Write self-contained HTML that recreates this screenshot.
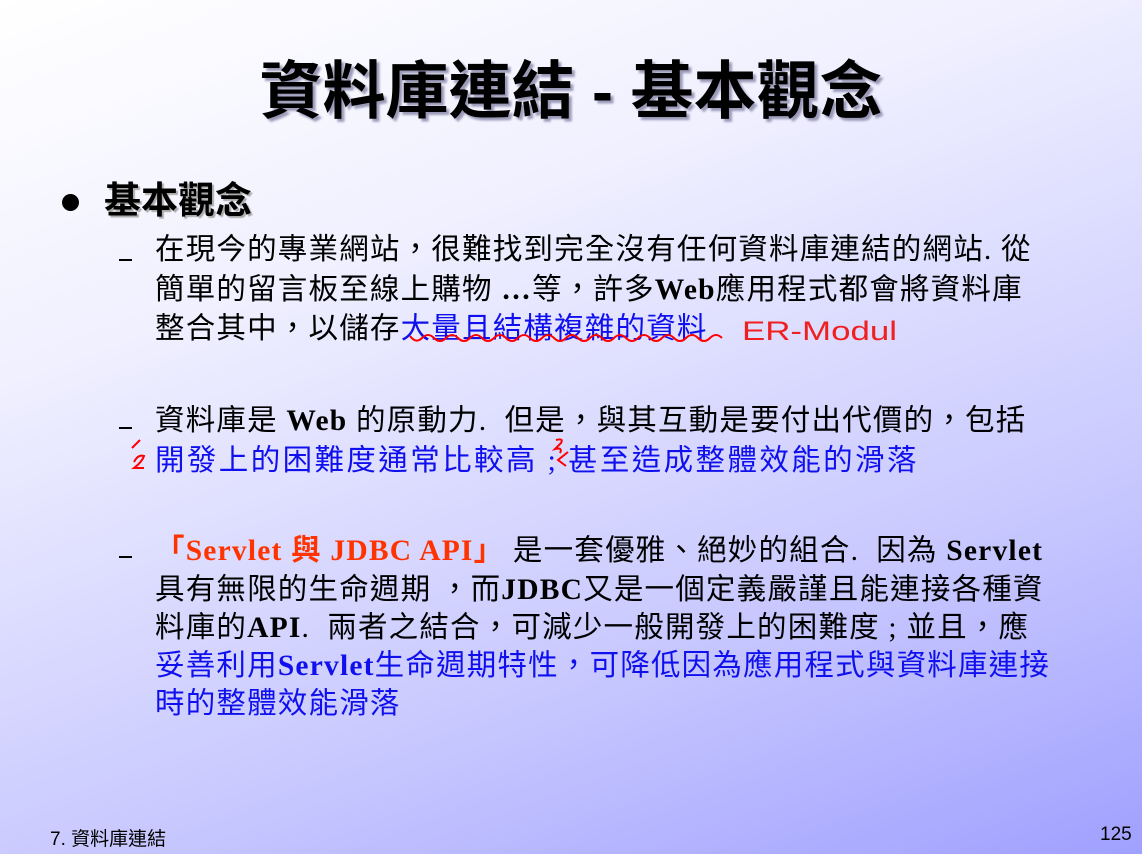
<!DOCTYPE html>
<html><head><meta charset="utf-8"><style>
body{margin:0;width:1142px;height:854px;overflow:hidden;position:relative;
background:linear-gradient(160deg,#ffffff 0%,#f0f0ff 30%,#c8c8ff 70%,#a0a0ff 100%);
font-family:"Liberation Serif","Noto Sans CJK TC",serif;}
.t{position:absolute;left:0;width:1142px;top:52px;text-align:center;font-family:"Liberation Sans","Noto Sans CJK TC",sans-serif;font-weight:bold;font-size:63px;line-height:80px;color:#000;text-shadow:3px 3px 2px #9a9ab8;}
.b{position:absolute;left:104px;top:178px;font-family:"Liberation Sans","Noto Sans CJK TC",sans-serif;font-weight:bold;font-size:37px;line-height:46px;text-shadow:2px 2px 1px #aaa;}
.dot{position:absolute;left:62px;top:194px;width:17px;height:17px;border-radius:50%;background:#000;}
.l{position:absolute;left:155px;font-size:29.5px;letter-spacing:1.2px;line-height:38px;white-space:nowrap;color:#000}
.d{position:absolute;left:119px;width:13px;height:2px;background:#000}
.blue{color:#1010ee}.red{color:#ff3300}
.l.blue{letter-spacing:2.4px}
b{font-weight:bold}
.f{position:absolute;top:824px;font-family:"Liberation Sans","Noto Sans CJK TC",sans-serif;font-size:19px}
</style></head><body>
<div class="t">資料庫連結 - 基本觀念</div>
<div class="dot"></div>
<div class="b">基本觀念</div>

<div class="d" style="top:259px"></div>
<div class="l" style="top:231px">在現今的專業網站，很難找到完全沒有任何資料庫連結的網站. 從</div>
<div class="l" style="top:271px">簡單的留言板至線上購物 <b>…</b>等，許多<b>Web</b>應用程式都會將資料庫</div>
<div class="l" style="top:310px">整合其中，以儲存<span class="blue">大量且結構複雜的資料</span></div>
<svg style="position:absolute;left:0;top:0" width="1142" height="854">
<path d="M410 336 q6 8 12 2 t12 0 t12 0 t12 0 t12 0 t12 0 t12 0 t12 0 t12 0 t12 0 t12 0 t12 0 t12 0 t12 0 t12 0 t12 0 t12 0 t12 0 t12 0 t12 0 t12 0 t12 0 t12 0 t12 0 t12 0 t12 0" stroke="#f00" stroke-width="2" fill="none"/>
<text x="742" y="340" fill="#f02020" font-family="Liberation Sans" font-size="27" textLength="155" lengthAdjust="spacingAndGlyphs">ER-Modul</text>
<path d="M132 448 l8 -8 M134 462 q4 -8 10 -6 q-2 6 -10 12 l10 0" stroke="#f00" stroke-width="2" fill="none"/>
<path d="M556 440 q8 -2 5 3 l-6 6 q8 -2 5 4 M568 452 l-10 8 l8 6" stroke="#f00" stroke-width="2" fill="none"/>
</svg>

<div class="d" style="top:427px"></div>
<div class="l" style="top:402px">資料庫是 <b>Web</b> 的原動力.&nbsp; 但是，與其互動是要付出代價的，包括</div>
<div class="l blue" style="top:442px">開發上的困難度通常比較高 ; 甚至造成整體效能的滑落</div>

<div class="d" style="top:556px"></div>
<div class="l" style="top:532px"><b class="red">「Servlet 與 JDBC API」</b> 是一套優雅、絕妙的組合.&nbsp; 因為 <b>Servlet</b></div>
<div class="l" style="top:571px">具有無限的生命週期 ，而<b>JDBC</b>又是一個定義嚴謹且能連接各種資</div>
<div class="l" style="top:609px">料庫的<b>API</b>.&nbsp; 兩者之結合，可減少一般開發上的困難度 ; 並且，應</div>
<div class="l blue" style="top:647px;letter-spacing:1.2px">妥善利用<b>Servlet</b>生命週期特性，可降低因為應用程式與資料庫連接</div>
<div class="l blue" style="top:685px;letter-spacing:1.2px">時的整體效能滑落</div>

<div class="f" style="left:50px">7. 資料庫連結</div>
<div class="f" style="left:1100px">125</div>
</body></html>
